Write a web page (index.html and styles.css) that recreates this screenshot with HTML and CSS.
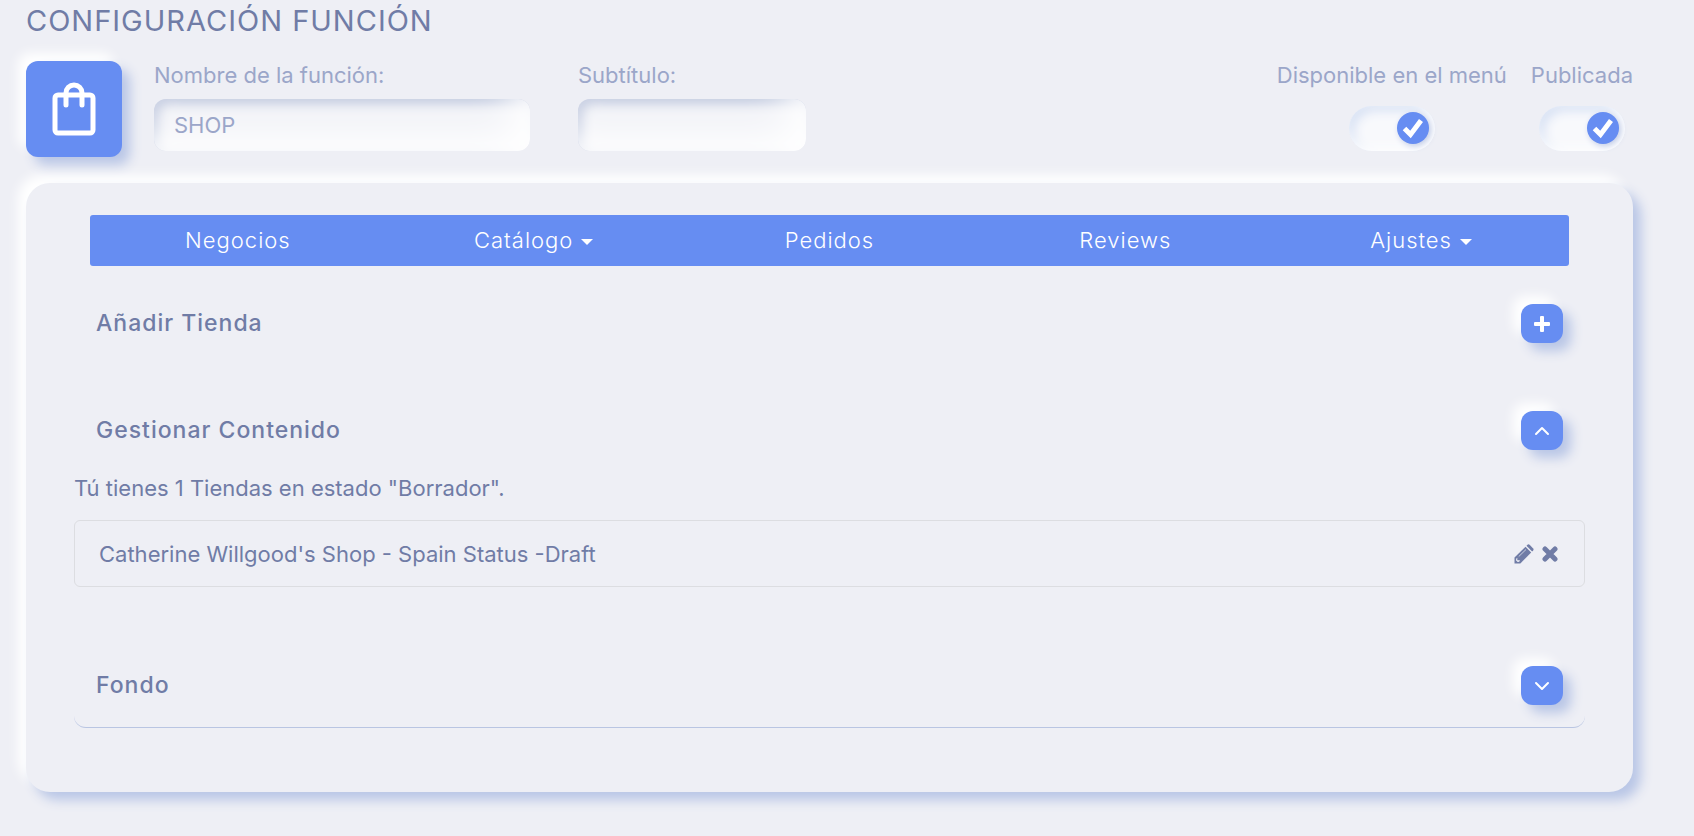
FILE: index.html
```html
<!DOCTYPE html>
<html lang="es">
<head>
  <meta charset="UTF-8" />
  <meta name="viewport" content="width=device-width, initial-scale=1" />
  <title>Configuración función</title>
  <link rel="stylesheet" href="styles.css">
</head>
<body>
  <main class="page">
    <h1>Configuración función</h1>

    <form class="feature-head" onsubmit="return false;">
      <button type="button" class="feature-icon" aria-label="Cambiar icono">
        <svg width="44" height="56" viewBox="0 0 44 56" fill="none" stroke="#fff" stroke-width="5" stroke-linecap="round" stroke-linejoin="round">
          <rect x="3" y="14" width="38" height="38" rx="3" />
          <path d="M14 24V12a8 8 0 0 1 16 0v12" />
        </svg>
      </button>
      <div class="field field-name">
        <label for="featureName">Nombre de la función:</label>
        <input type="text" id="featureName" value="SHOP" />
      </div>
      <div class="field field-subtitle">
        <label for="featureSubtitle">Subtítulo:</label>
        <input type="text" id="featureSubtitle" />
      </div>
      <div class="switches">
        <label class="switch">Disponible en el menú
          <input type="checkbox" name="inMenu" checked />
        </label>
        <label class="switch">Publicada
          <input type="checkbox" name="published" checked />
        </label>
      </div>
    </form>

    <div class="card">
      <nav class="tabs">
        <a href="#negocios">Negocios</a>
        <a href="#catalogo">Catálogo <span class="caret"></span></a>
        <a href="#pedidos">Pedidos</a>
        <a href="#reviews">Reviews</a>
        <a href="#ajustes">Ajustes <span class="caret"></span></a>
      </nav>

      <section class="panel">
        <div class="panel-head">
          <h2>Añadir Tienda</h2>
          <button type="button" class="toggle" aria-label="Añadir tienda">
            <svg width="16" height="16" viewBox="0 0 16 16" fill="#fff">
              <rect x="0" y="6" width="16" height="4" rx="1" />
              <rect x="6" y="0" width="4" height="16" rx="1" />
            </svg>
          </button>
        </div>
      </section>

      <section class="panel panel-content">
        <div class="panel-head">
          <h2>Gestionar Contenido</h2>
          <button type="button" class="toggle" aria-label="Contraer">
            <svg width="16" height="10" viewBox="0 0 16 10" fill="none" stroke="#fff" stroke-width="2" stroke-linecap="round" stroke-linejoin="round">
              <path d="M2 8l6-6 6 6" />
            </svg>
          </button>
        </div>
        <p>Tú tienes 1 Tiendas en estado "Borrador".</p>
        <ul class="shops">
          <li>
            <span>Catherine Willgood's Shop - Spain Status -Draft</span>
            <div class="actions">
              <button type="button" aria-label="Editar">
                <svg width="20" height="20" viewBox="0 0 20 20">
                  <path fill="#707ca6" d="M0.500 19.500V13.500L11.500 2.800L17.200 8.500L6.300 19.500Z" />
                  <path fill="#707ca6" d="M12.500 1.800L13.800 0.600Q14.700 0 15.600 0.800L19.200 4.400Q20 5.300 19.300 6.200L18.100 7.500Z" />
                  <path fill="none" stroke="#eeeff5" stroke-width="0.700" d="M4.700 12.600L12 5.500" />
                  <path fill="#eeeff5" d="M2.200 14.700L3.300 13.700V16.200H6L5.200 17.700L3.700 17.900L2.100 16.400Z" />
                </svg>
              </button>
              <button type="button" aria-label="Eliminar">
                <svg width="16" height="16" viewBox="0 0 16 16" fill="none" stroke="#707ca6" stroke-width="5" stroke-linecap="round">
                  <path d="M3 3l10 10M13 3L3 13" />
                </svg>
              </button>
            </div>
          </li>
        </ul>
      </section>

      <section class="panel panel-last">
        <div class="panel-head">
          <h2>Fondo</h2>
          <button type="button" class="toggle" aria-label="Desplegar">
            <svg width="16" height="10" viewBox="0 0 16 10" fill="none" stroke="#fff" stroke-width="2" stroke-linecap="round" stroke-linejoin="round">
              <path d="M2 2l6 6 6-6" />
            </svg>
          </button>
        </div>
      </section>
    </div>
  </main>
</body>
</html>
```
FILE: styles.css
```css
* { box-sizing: border-box; }
body { margin: 0; background: #eeeff5; color: #707ca6; font-family: Inter, "Liberation Sans", sans-serif; font-size: 22px; font-weight: 400; line-height: 28px; }
button { border: none; padding: 0; cursor: pointer; }
svg { display: block; }

.page { padding: 3px 61px 44px 26px; }
h1 { margin: 0 0 22px; font-size: 29px; font-weight: 400; line-height: 36px; letter-spacing: 1px; text-transform: uppercase; }

.feature-head { display: flex; align-items: flex-start; margin-bottom: 26px; color: #9ba6c9; }
.feature-icon { display: flex; align-items: center; justify-content: center; width: 96px; height: 96px; margin-right: 32px; border-radius: 12px; background: #668df2; box-shadow: 8px 8px 12px #b9c6e6, -8px -8px 12px #fff; }
.field { display: flex; flex-direction: column; gap: 10px; margin-right: 48px; }
.field-name { flex: 0 1 376px; }
.field-subtitle { flex: 0 1 228px; }
.field input { width: 100%; height: 52px; padding: 0 20px; border: none; border-radius: 12px; background: #f1f2f7; box-shadow: inset -16px -16px 40px #fff, inset 4px 4px 12px #acb7d4; color: #9ba6c9; font: inherit; }
.switches { display: flex; gap: 24px; margin-left: auto; }
.switch { display: flex; flex-direction: column; align-items: center; gap: 17px; white-space: nowrap; }
.switch input { appearance: none; display: flex; align-items: center; justify-content: flex-end; width: 86px; height: 45px; margin: 0; padding: 0 6px 1px; border-radius: 23px; background: #f8f9fc; box-shadow: inset -4px -4px 12px #fff, inset 4px 4px 12px #d3def3; cursor: pointer; }
.switch input:not(:checked) { justify-content: flex-start; }
.switch input::before { content: ""; width: 32px; height: 32px; border-radius: 50%; background: #668df2 url('data:image/svg+xml,<svg xmlns="http://www.w3.org/2000/svg" viewBox="0 0 32 32"><path d="M7.500 16.500l6 6L24 8.500" fill="none" stroke="white" stroke-width="5"/></svg>'); box-shadow: 2px 2px 6px #bfcae6; }

.card { padding: 32px 48px 64px; border-radius: 24px; background: #eeeff5; box-shadow: 8px 8px 12px #b9c6e6, -8px -8px 12px #fff; }
.tabs { display: flex; margin: 0 16px 22px; border-radius: 3px; background: #668df2; }
.tabs a { flex: 1; display: flex; align-items: center; justify-content: center; gap: 8px; height: 51px; padding-bottom: 2px; color: #fff; font-weight: 300; letter-spacing: 1px; text-decoration: none; }
.caret { margin-top: 4px; border: 6px solid transparent; border-top-color: #fff; border-bottom: 0; }

.panel { margin-bottom: 36px; }
.panel-head { display: flex; align-items: center; justify-content: space-between; padding: 16px 22px; }
.panel-content { margin-bottom: 63px; }
.panel-last { margin: 0; padding-bottom: 6px; border-bottom: 1px solid #b9c5e2; border-radius: 12px; }
h2 { margin: 0; padding-bottom: 2px; font-size: 23px; font-weight: 500; line-height: 28px; letter-spacing: 1px; }
.toggle { display: flex; align-items: center; justify-content: center; width: 42px; height: 39px; border-radius: 12px; background: #668df2; box-shadow: 8px 8px 12px #b9c6e6, -8px -8px 12px #fff; }
.panel p { margin: 8px 0 18px; }
.shops { margin: 0; padding: 0; list-style: none; }
.shops li { display: flex; align-items: center; justify-content: space-between; min-height: 67px; padding: 0 26px 0 24px; border: 1px solid #dcdde1; border-radius: 6px; }
.actions { display: flex; align-items: center; gap: 8px; }
.actions button { background: none; }
```
